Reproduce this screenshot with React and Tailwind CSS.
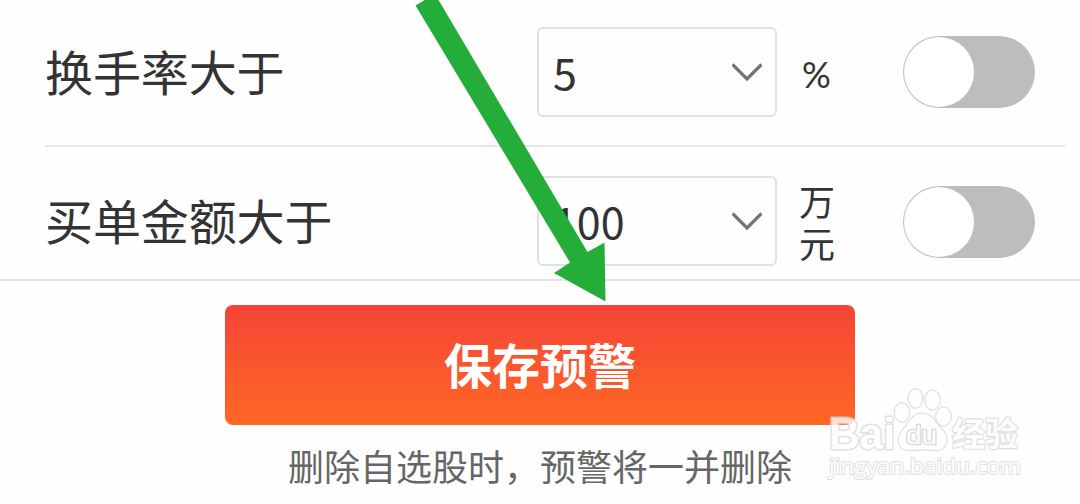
import React, { useState } from 'react'

const rules = [
  { id: 'turnover', label: '换手率大于', value: '5', unit: '%' },
  { id: 'amount', label: '买单金额大于', value: '100', unit: '万元' },
]

const ChevronDown = () => (
  <svg width="30" height="19" viewBox="0 0 30 19" fill="none" className="mr-px shrink-0">
    <path d="M0.5 1.5L15 16L29.5 1.5" stroke="#747474" strokeWidth="3.2" />
  </svg>
)

const Toggle = ({ checked, onChange }) => (
  <button
    type="button"
    role="switch"
    aria-checked={checked}
    onClick={onChange}
    className={`flex h-[72px] w-[132px] shrink-0 rounded-full p-px ${
      checked ? 'justify-end bg-[#f54336]' : 'justify-start bg-[#bdbdbd]'
    }`}
  >
    <span className="size-[70px] rounded-full bg-white" />
  </button>
)

const RuleRow = ({ rule, checked, onToggle }) => (
  <div className="flex h-[90px] items-center">
    <span className="w-[492px] pb-[4px] text-[48px] leading-none tracking-[-0.1px]">{rule.label}</span>
    <div className="flex h-[90px] w-[240px] items-center justify-between rounded-md border-2 border-[#e0e0e0] pr-3 pl-[14px]">
      <span className="pb-[2px] text-[43px] leading-none">{rule.value}</span>
      <ChevronDown />
    </div>
    <span
      className={`ml-[22px] w-[40px] leading-[42px] ${
        rule.unit === '%' ? "pt-[3px] pl-[3px] font-['Lato',sans-serif] text-[36px]" : 'pb-px text-[36px]'
      }`}
    >
      {rule.unit}
    </span>
    <div className={rule.unit === '%' ? 'ml-16' : 'ml-16 pt-[2px]'}>
      <Toggle checked={checked} onChange={onToggle} />
    </div>
  </div>
)

const Arrow = () => (
  <svg width="200" height="304" viewBox="410 0 200 304" className="pointer-events-none absolute top-0 left-[410px]">
    <polygon points="415.5,5.5 435,-6 587.5,252 604.5,242.5 605.5,301.5 554,273 570,262.5" fill="#24ad38" />
  </svg>
)

const Watermark = () => (
  <svg
    width="210"
    height="110"
    viewBox="820 380 210 110"
    className="pointer-events-none absolute top-[380px] left-[820px] opacity-80"
    fill="#fff"
    stroke="#d8d8d8"
    paintOrder="stroke"
    strokeLinejoin="round"
  >
    <g strokeWidth="2.4">
      <ellipse cx="902" cy="412.5" rx="7.2" ry="9.2" />
      <ellipse cx="915.5" cy="398.5" rx="6.8" ry="9.2" />
      <ellipse cx="932.5" cy="400" rx="7.2" ry="9.2" />
      <ellipse cx="943.5" cy="416.5" rx="7.2" ry="9" />
      <path d="M922 413.5C914 413.5 911 420 907 425C903 430 898.5 434 898.5 441C899 448 905 450.5 911 450C918 449 927 449 934 450C941 450.5 946 447 946.5 440C947 433 941 429 937 424C933 419 930 413.5 922 413.5Z" />
    </g>
    <text
      x="829"
      y="448.5"
      fontFamily="'Liberation Sans', sans-serif"
      fontWeight="700"
      fontSize="44"
      textLength="66"
      lengthAdjust="spacingAndGlyphs"
      strokeWidth="3"
    >
      Bai
    </text>
    <text
      x="906"
      y="443.5"
      fontFamily="'Liberation Sans', sans-serif"
      fontSize="26"
      textLength="31"
      lengthAdjust="spacingAndGlyphs"
      strokeWidth="2.6"
      stroke="#cfcfcf"
    >
      du
    </text>
    <text
      x="952"
      y="446"
      fontFamily="'Noto Sans CJK SC', sans-serif"
      fontSize="33"
      fontWeight="700"
      strokeWidth="2.4"
    >
      经验
    </text>
    <text
      x="829"
      y="474"
      fontFamily="'Open Sans', sans-serif"
      fontSize="22"
      textLength="192"
      lengthAdjust="spacingAndGlyphs"
      strokeWidth="2"
    >
      jingyan.baidu.com
    </text>
  </svg>
)

const App = () => {
  const [enabled, setEnabled] = useState({})

  const toggle = (id) => setEnabled((prev) => ({ ...prev, [id]: !prev[id] }))

  return (
    <div className="relative h-[504px] w-[1080px] overflow-hidden bg-[#fefefe] font-['Noto_Sans_CJK_SC',sans-serif] text-[#333]">
      <div className="border-b-2 border-[#e5e5e5] pt-[27px] pb-[13px] pl-[45px]">
        <div className="mr-[15px] mb-[29px] border-b-2 border-[#e5e5e5] pb-7">
          <RuleRow rule={rules[0]} checked={!!enabled.turnover} onToggle={() => toggle('turnover')} />
        </div>
        <RuleRow rule={rules[1]} checked={!!enabled.amount} onToggle={() => toggle('amount')} />
      </div>

      <div className="flex flex-col items-center pt-6">
        <button
          type="button"
          className="h-[120px] w-[630px] rounded-lg bg-linear-to-b from-[#f54336] to-[#ff6722] pb-[4px] text-[48px] leading-none font-bold text-white"
        >
          保存预警
        </button>
        <p className="mt-[22px] text-[36px] leading-none whitespace-nowrap text-[#666]">
          删除自选股时，预警将一并删除
        </p>
      </div>

      <Arrow />
      <Watermark />
    </div>
  )
}

export default App
